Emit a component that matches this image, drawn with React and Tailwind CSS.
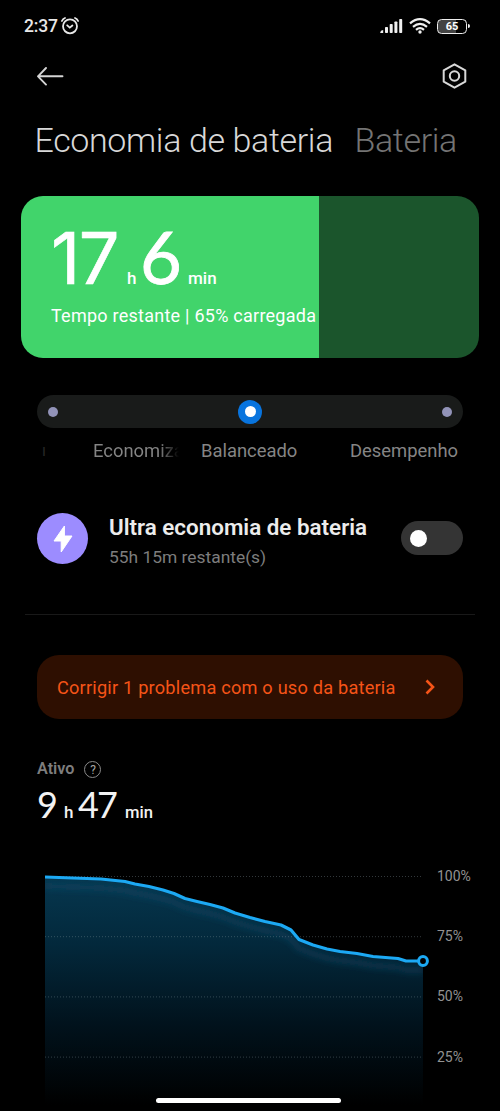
const levels = ["100%", "75%", "50%", "25%"];

const curve =
  "M0 17 L28 18 L56 19 L80 21.5 L90 24 L104 26.5 L118 30 L129 33.5 L140 38.5 L152 41.5 L165 44.5 L178 48 L190 53 L205 57.5 L220 61.5 L236 65 L246 70 L254 79.5 L268 85 L282 89 L295 91.5 L312 93.5 L328 96.5 L353 98.5 L361 101 L378 101";

function AlarmIcon() {
  return (
    <svg width="18" height="18" viewBox="0 0 18 18" fill="none" stroke="#e8e8e8" strokeWidth="1.8" strokeLinecap="round">
      <circle cx="9" cy="9.3" r="7" />
      <path d="M6.2 8.3 L8.8 10.6 L11.4 8.5" />
      <path d="M0.9 4 Q1.9 1.8 4 1 M17.1 4 Q16.1 1.8 14 1" />
    </svg>
  );
}

function SignalIcon() {
  return (
    <svg width="23" height="16" viewBox="0 0 23 16" fill="#f0f0f0">
      <path d="M0.3 15 Q-0.2 12.5 3.2 12 V15 Z" />
      <rect x="5" y="9" width="3" height="6" rx="0.8" />
      <rect x="9.7" y="6" width="3" height="9" rx="0.8" />
      <rect x="14.4" y="3.5" width="3" height="11.5" rx="0.8" />
      <rect x="19.2" y="1" width="3" height="14" rx="0.8" />
    </svg>
  );
}

function WifiIcon() {
  return (
    <svg width="22" height="16" viewBox="0 0 22 16" fill="none" stroke="#f0f0f0" strokeWidth="2.2">
      <path d="M1 5.4 Q11 -3 21 5.4" />
      <path d="M4 8.8 Q11 3 18 8.8" />
      <path d="M7 11.9 Q11 8.4 15 11.9" />
      <circle cx="11" cy="14" r="1.7" fill="#f0f0f0" stroke="none" />
    </svg>
  );
}

function StatusBar() {
  return (
    <div className="flex h-[52px] items-center pl-6 pr-[30px]">
      <span className="text-[17.5px] font-medium text-[#e8e8e8] tracking-[-0.2px]">2:37</span>
      <span className="ml-[3.5px]"><AlarmIcon /></span>
      <div className="ml-auto flex items-center">
        <SignalIcon />
        <span className="ml-[6px] mr-[6px]"><WifiIcon /></span>
        <div className="flex h-[15px] w-[30px] items-center justify-center rounded-[4.5px] border-[1.5px] border-[#eeeeee] bg-[linear-gradient(90deg,#444_64%,#000_64%)] text-[11px] font-bold leading-[13px] text-white">
          65
        </div>
        <div className="ml-px h-1 w-[2px] rounded-r bg-[#eeeeee]" />
      </div>
    </div>
  );
}

function Header() {
  return (
    <div className="flex h-12 items-center justify-between pl-[37px] pr-8">
      <svg width="27" height="20" viewBox="0 0 27 20" fill="none" stroke="#d4d4d4" strokeWidth="1.9" strokeLinecap="round" strokeLinejoin="round">
        <path d="M25.5 10.3 H1 M9 2 L1 10.3 L9 18.6" />
      </svg>
      <svg width="27" height="28" viewBox="0 0 27 28" fill="none" stroke="#d8d8d8" strokeWidth="2" strokeLinejoin="round">
        <path d="M13.5 2.3 L24.3 8.3 V19.7 L13.5 25.7 L2.7 19.7 V8.3 Z" />
        <circle cx="13.5" cy="14" r="4.7" />
      </svg>
    </div>
  );
}

function Tabs() {
  return (
    <div className="flex h-[96px] pl-[34.5px] pt-[19px] text-[34px] font-light leading-[42px] whitespace-nowrap tracking-[-0.36px]">
      <h1 className="w-[320px] text-[#d8d8d8]">Economia de bateria</h1>
      <span className="text-[#747474]">Bateria</span>
    </div>
  );
}

function RemainingCard() {
  return (
    <div className="mx-[21px] h-[162px] overflow-hidden rounded-[22px] bg-[linear-gradient(90deg,#41d46b_298px,#1b552c_298px)] pl-[30px] text-white">
      <div className="flex h-[106px] items-baseline pt-[16px] leading-[88px]">
        <span className="w-[76px] text-[72px] tracking-[-1.5px] font-[Inter] [-webkit-text-stroke:0.6px_white]">17</span>
        <span className="w-[13px] text-[17px] font-medium">h</span>
        <span className="w-[48px] text-[72px] font-[Lato] [-webkit-text-stroke:0.8px_white]">6</span>
        <span className="text-[17px] font-medium">min</span>
      </div>
      <p className="text-[18px] leading-[27px] whitespace-nowrap tracking-[0.25px]">Tempo restante | 65% carregada</p>
    </div>
  );
}

function ModeSlider() {
  return (
    <div className="mt-[37px]">
      <div className="mx-[37px] flex h-[33px] items-center justify-between rounded-full bg-[#191b1a] px-[11px]">
        <span className="size-[10px] rounded-full bg-[#9293b8]" />
        <span className="flex size-6 items-center justify-center rounded-full bg-[#0874de]">
          <span className="size-[11px] rounded-full bg-white" />
        </span>
        <span className="size-[10px] rounded-full bg-[#9293b8]" />
      </div>
      <div className="flex h-[46px] pl-[42px] text-[18.4px] leading-[46px] whitespace-nowrap text-[#858585]">
        <span className="w-[51px] text-[16px] text-[#262626]">ı</span>
        <span className="w-[86px] bg-[linear-gradient(90deg,#858585_66px,transparent_86px)] bg-clip-text text-transparent">Economiza</span>
        <span className="ml-[22px] w-[149px]">Balanceado</span>
        <span>Desempenho</span>
      </div>
    </div>
  );
}

function UltraSaver() {
  return (
    <div className="mx-[25px] flex h-[141px] items-start border-b border-[#191919] px-3">
      <div className="mt-[39px] flex size-[51px] items-center justify-center rounded-full bg-[#9c8cff]">
        <svg width="20" height="28" viewBox="0 0 20 28" fill="#fff" stroke="#fff" strokeLinejoin="round">
          <path d="M11.4 1 L1 16 H8.2 V27 L19 11 H11.4 Z" />
        </svg>
      </div>
      <div className="ml-[21px] mt-[38px] whitespace-nowrap">
        <h2 className="text-[22.4px] font-semibold leading-[30px] text-[#ececec]">Ultra economia de bateria</h2>
        <p className="text-[17.4px] leading-[30px] text-[#7d7d7d]">55h 15m restante(s)</p>
      </div>
      <div className="ml-auto mt-[47px] flex h-[34px] w-[62px] items-center rounded-full bg-[#343434] pl-[9px]">
        <span className="size-[17px] rounded-full bg-white" />
      </div>
    </div>
  );
}

function ProblemBanner() {
  return (
    <div className="mx-[37px] mt-[40px] flex h-[64px] items-center justify-between rounded-[22px] bg-[#2e0f01] pl-5 pr-7 text-[#f55418]">
      <span className="mt-[2px] text-[18.2px] whitespace-nowrap tracking-[0.2px]">Corrigir 1 problema com o uso da bateria</span>
      <svg width="10" height="16" viewBox="0 0 10 16" fill="none" stroke="currentColor" strokeWidth="2.6">
        <path d="M1.5 1.5 L8 8 L1.5 14.5" />
      </svg>
    </div>
  );
}

function ActiveTime() {
  return (
    <div className="ml-[37px] mt-[38px] h-[103px]">
      <div className="flex h-[25px] items-center text-[16.2px] font-semibold text-[#7d7d7d]">
        Ativo
        <span className="ml-[10px] flex size-[17px] items-center justify-center rounded-full border border-[#8b8b8b] text-[12px] font-normal leading-none text-[#a5a5a5]">?</span>
      </div>
      <div className="flex items-baseline leading-[44px] text-[#f2f2f2]">
        <span className="w-[27px] text-[36px] font-[Lato]">9</span>
        <span className="w-[14px] text-[17px] font-medium">h</span>
        <span className="w-[47px] text-[36px] font-[Lato] tracking-[-2px]">47</span>
        <span className="text-[16.6px] font-medium">min</span>
      </div>
    </div>
  );
}

function BatteryChart() {
  return (
    <div className="flex pl-[45px]">
      <svg width="386" height="251" viewBox="0 0 386 251" className="shrink-0">
        <defs>
          <linearGradient id="area" x1="0" y1="17" x2="0" y2="245" gradientUnits="userSpaceOnUse">
            <stop offset="0" stopColor="#06374f" />
            <stop offset="0.3" stopColor="#03283b" />
            <stop offset="0.65" stopColor="#01121c" />
            <stop offset="1" stopColor="#000000" />
          </linearGradient>
          <clipPath id="under">
            <path d={`${curve} V251 H0 Z`} />
          </clipPath>
          <filter id="soft" x="-10%" y="-30%" width="120%" height="180%">
            <feGaussianBlur stdDeviation="3" />
          </filter>
        </defs>
        <path d={`${curve} V251 H0 Z`} fill="url(#area)" />
        <g clipPath="url(#under)">
          <path d={curve} transform="translate(0 9)" fill="none" stroke="#135070" strokeOpacity="0.4" strokeWidth="6" filter="url(#soft)" />
        </g>
        {levels.map((level, i) => (
          <path key={level} d={`M0 ${16.5 + i * 60.2} H378`} stroke="#8fa0a8" strokeOpacity="0.35" strokeDasharray="1 2" />
        ))}
        <path d={curve} fill="none" stroke="#1ca9f4" strokeWidth="3.2" strokeLinejoin="round" />
        <circle cx="378" cy="101" r="4.4" fill="#000" stroke="#1ca9f4" strokeWidth="3" />
      </svg>
      <div className="ml-[6px] -mt-[14px] flex flex-col text-[14px] leading-[60.2px] text-[#929292]">
        {levels.map((level) => (
          <span key={level}>{level}</span>
        ))}
      </div>
    </div>
  );
}

export default function App() {
  return (
    <div className="relative h-[1111px] w-[500px] overflow-hidden bg-black font-[Roboto,sans-serif]">
      <StatusBar />
      <Header />
      <Tabs />
      <RemainingCard />
      <ModeSlider />
      <UltraSaver />
      <ProblemBanner />
      <ActiveTime />
      <BatteryChart />
      <div className="absolute bottom-2 left-[156px] h-[5px] w-[185px] rounded-full bg-white" />
    </div>
  );
}
